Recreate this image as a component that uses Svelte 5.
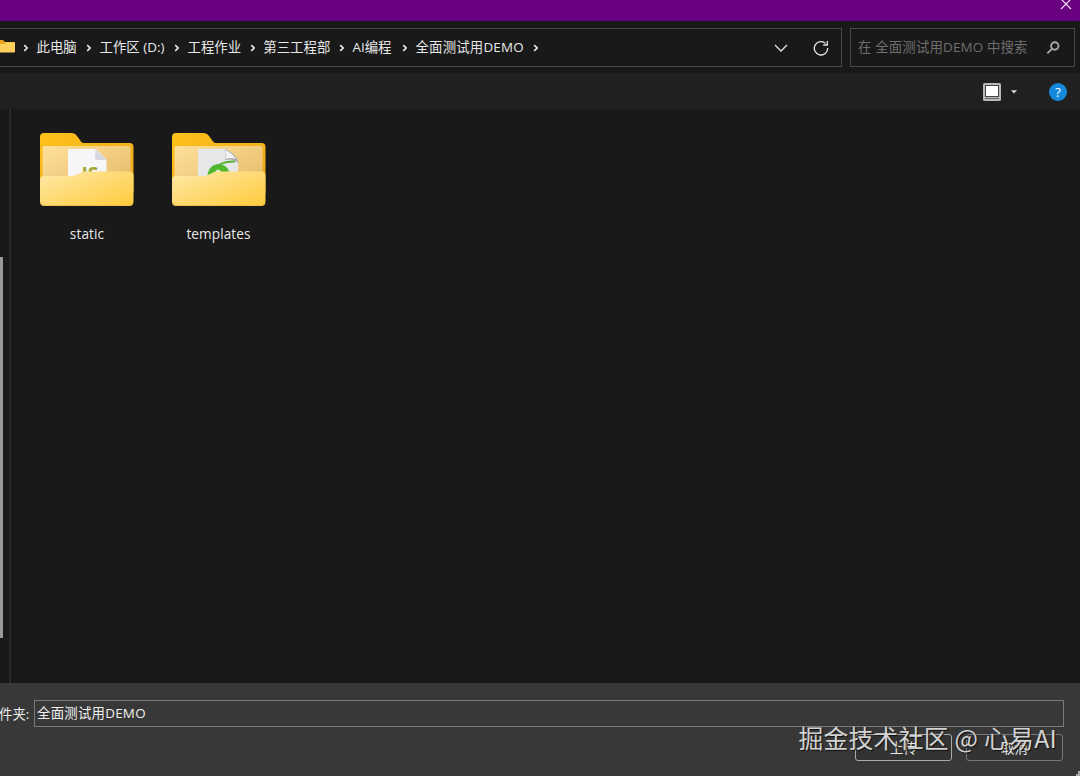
<script lang="ts">
  interface Crumb {
    label: string;
    width: number;
  }

  const crumbs: Crumb[] = [
    { label: "此电脑", width: 40.5 },
    { label: "工作区 (D:)", width: 65.5 },
    { label: "工程作业", width: 53.3 },
    { label: "第三工程部", width: 66.7 },
    { label: "AI编程", width: 40.5 },
    { label: "全面测试用DEMO", width: 109 },
  ];

  const folders = [
    { name: "static", kind: "js" },
    { name: "templates", kind: "html" },
  ];

  let folderName = $state("全面测试用DEMO");
</script>

{#snippet chevron()}
  <svg class="chevron" width="6" height="8" viewBox="0 0 6 8">
    <path d="M1.2 1.1 4.2 4 1.2 6.9" />
  </svg>
{/snippet}

<div class="dialog">
  <header class="titlebar">
    <button class="close" aria-label="关闭">
      <svg width="14" height="14" viewBox="0 0 14 14"><path d="M2 2 12 12M12 2 2 12" /></svg>
    </button>
  </header>

  <div class="address-row">
    <nav class="address">
      <svg class="mini-folder" width="15" height="13" viewBox="0 0 15 13">
        <path d="M0 0H3L5 2H14Q15 2 15 3V12H0Z" fill="#e9a51d" />
        <path d="M0 4H4L6 2.3H14Q15 2.3 15 3.3V11.5Q15 12.4 14 12.4H0Z" fill="#ffd15c" />
      </svg>
      {@render chevron()}
      {#each crumbs as crumb}
        <span class="crumb" style:width="{crumb.width}px">{crumb.label}</span>
        {@render chevron()}
      {/each}
      <span class="address-tools">
        <svg width="14" height="8" viewBox="0 0 14 8"><path d="M1 1 7 7 13 1" /></svg>
        <svg width="16" height="16" viewBox="0 0 16 16">
          <path d="M12.6 3.4A6.7 6.7 0 1 0 14.7 8M14.3 1V5H10.2" />
        </svg>
      </span>
    </nav>
    <div class="search">
      <span>在 全面测试用DEMO 中搜索</span>
      <svg width="14" height="14" viewBox="0 0 14 14">
        <circle cx="8.8" cy="5" r="3.7" />
        <path d="M6 7.9 1.3 12.4" />
      </svg>
    </div>
  </div>

  <div class="toolbar">
    <svg class="view" width="18" height="18" viewBox="0 0 18 18">
      <rect width="18" height="18" rx="1.5" fill="#b9b9b9" />
      <rect x="2.5" y="2.5" width="13" height="11" fill="#fff" stroke="#444" />
      <path d="M2 15.5H16" stroke="#666" />
    </svg>
    <svg class="drop" width="6" height="4" viewBox="0 0 6 4"><path d="M0 .3H6L3 3.5Z" fill="#ddd" /></svg>
    <button class="help" aria-label="帮助">?</button>
  </div>

  <div class="body">
    <aside class="tree"><div class="thumb"></div></aside>
    <main class="files">
      {#each folders as folder}
        <figure class="folder">
          <svg width="94" height="74" viewBox="0 0 94 74">
            <defs>
              <linearGradient id="back-{folder.kind}" x1="0" y1="0" x2="1" y2="1">
                <stop offset="0" stop-color="#ffc21a" />
                <stop offset="1" stop-color="#eaa51b" />
              </linearGradient>
              <linearGradient id="inner-{folder.kind}" x1="0" y1="0" x2="1" y2="1">
                <stop offset="0" stop-color="#ffe09a" />
                <stop offset="1" stop-color="#e2b867" />
              </linearGradient>
              <linearGradient id="front-{folder.kind}" x1="0" y1="0" x2="1" y2="1">
                <stop offset="0" stop-color="#ffe9a8" />
                <stop offset="1" stop-color="#ffcb3b" />
              </linearGradient>
            </defs>
            <path
              d="M4 0H31Q35 0 37 3L41 8.5Q42 10 44 10H89.5Q93.5 10 93.5 14V60H0V4Q0 0 4 0Z"
              fill="url(#back-{folder.kind})"
            />
            <rect x="2.5" y="13" width="88" height="45" rx="2" fill="url(#inner-{folder.kind})" />
            {#if folder.kind === "js"}
              <path d="M28 16H56L66.5 26.5V50H28Z" fill="#f6f6f9" />
              <path d="M55.5 16 66.5 27H57.5Q55 27 55 24.5Z" fill="#d7d8df" />
              <text class="js" x="41.5" y="47.5">JS</text>
            {:else}
              <path d="M26 16H53Q60 18 66 28V50H26Z" fill="#e6e7e8" />
              <path d="M53 16Q55 22 53 27Q62 25 67 31Q64 20 53 16Z" fill="#a9abb0" />
              <path d="M53.5 17Q60 20 64 26Q59 24 54 26Q55 21 53.5 17Z" fill="#f4f4f5" />
              <path
                fill-rule="evenodd"
                d="M35 45Q36 32 46 31Q54 31 57 38Q58 41 57 45ZM41 45H51Q50 37 46 36.5Q42 38 41 45Z"
                fill="#52bb2b"
              />
              <path d="M43 41Q46 36 50 40V44H42Z" fill="#d7efcc" />
              <path d="M37 42Q45 28 63 28.5" fill="none" stroke="#56b23c" stroke-width="1.8" />
            {/if}
            <path
              d="M0 47Q0 43 4 43H30Q34 43 37 41.5L40 40Q42 38.5 45 38.5H89.5Q93.5 38.5 93.5 42.5V68.5Q93.5 73 89 73H4.5Q0 73 0 68.5Z"
              fill="url(#front-{folder.kind})"
            />
            <path d="M1 69.5Q2 72.5 5 72.5H88.5Q91.5 72.5 92.5 69.5" fill="none" stroke="#f3c146" />
          </svg>
          <figcaption>{folder.name}</figcaption>
        </figure>
      {/each}
    </main>
  </div>

  <footer class="footer">
    <label class="name-row">
      <span class="name-label">件夹:</span>
      <input bind:value={folderName} />
    </label>
    <div class="actions">
      <button class="action primary">上传</button>
      <button class="action">取消</button>
    </div>
    <div class="watermark">掘金技术社区 @ 心易AI</div>
    <svg class="grip" width="4" height="5" viewBox="0 0 4 5"><path d="M2 0H4V5H0V3H2Z" fill="#aaa" /></svg>
  </footer>
</div>

<style>
  :global(body) {
    margin: 0;
    background: #191919;
  }
  .dialog {
    box-sizing: border-box;
    width: 1080px;
    height: 776px;
    display: flex;
    flex-direction: column;
    overflow: hidden;
    background: #191919;
    color: #e8e8e8;
    font: 13.4px/20px "Open Sans", "Noto Sans CJK SC", sans-serif;
  }
  button {
    padding: 0;
    border: none;
    background: none;
    color: inherit;
    font: inherit;
  }
  svg {
    display: block;
    flex: none;
  }
  .titlebar {
    height: 21px;
    flex: none;
    display: flex;
    justify-content: flex-end;
    background: #68007f;
  }
  .close {
    height: 14px;
    margin: -3px 7.5px 0 0;
  }
  .close path {
    stroke: #f0dcf4;
    stroke-width: 1.2;
  }
  .address-row {
    display: flex;
    gap: 8px;
    height: 39px;
    margin: 7px 5px 6px 0;
    flex: none;
  }
  .address {
    box-sizing: border-box;
    flex: 1;
    display: flex;
    align-items: center;
    border: 1px solid #484848;
    border-left: none;
  }
  .mini-folder {
    margin: -3px 8px 0 0;
  }
  .chevron {
    margin-top: 1px;
  }
  .chevron path {
    fill: none;
    stroke: #eee;
    stroke-width: 1.6;
  }
  .crumb {
    flex: none;
    margin: -2px 8.9px 0 7.6px;
    white-space: nowrap;
  }
  .crumb:last-of-type,
  .crumb:nth-last-of-type(2) {
    letter-spacing: 0.2px;
  }
  .address-tools {
    display: flex;
    align-items: center;
    gap: 25px;
    margin-left: auto;
    padding-right: 12px;
  }
  .address-tools path {
    fill: none;
    stroke: #e6e6e6;
    stroke-width: 1.3;
  }
  .search {
    box-sizing: border-box;
    width: 225px;
    display: flex;
    align-items: center;
    justify-content: space-between;
    padding: 0 14px 0 7px;
    border: 1px solid #484848;
    color: #6e6e6e;
    letter-spacing: 0.17px;
    white-space: nowrap;
  }
  .search span {
    margin-top: -1px;
  }
  .search svg {
    fill: none;
    stroke: #a8a8a8;
    stroke-width: 1.9;
  }
  .toolbar {
    height: 36px;
    flex: none;
    display: flex;
    align-items: center;
    justify-content: flex-end;
    padding-right: 13px;
    background: #202020;
  }
  .view {
    margin-top: 1px;
  }
  .drop {
    margin: 2px 32px 0 10px;
  }
  .help {
    width: 18px;
    height: 18px;
    margin-top: 1px;
    border-radius: 50%;
    background: #1488da;
    color: #fff;
    font-size: 13px;
    line-height: 18px;
  }
  .body {
    flex: 1;
    min-height: 0;
    display: flex;
  }
  .tree {
    box-sizing: border-box;
    width: 11px;
    border-right: 2px solid #292929;
  }
  .thumb {
    width: 3px;
    height: 381px;
    margin-top: 148px;
    background: #9a9a9a;
  }
  .files {
    display: flex;
    align-items: flex-start;
    gap: 37.5px;
    padding: 24px 0 0 29px;
  }
  .folder {
    width: 94px;
    margin: 0;
    text-align: center;
  }
  figcaption {
    margin-top: 17px;
    font-size: 13.6px;
    letter-spacing: 0.1px;
  }
  .js {
    fill: #a0a632;
    font: bold 19px "Open Sans", sans-serif;
  }
  .footer {
    position: relative;
    box-sizing: border-box;
    height: 93px;
    flex: none;
    padding: 17px 16px 0 0;
    background: #383838;
  }
  .name-row {
    display: flex;
    align-items: center;
  }
  .name-label {
    width: 34px;
    margin: 0 1px 0 -1px;
    white-space: nowrap;
  }
  input {
    box-sizing: border-box;
    flex: 1;
    height: 27px;
    padding: 0 2px 4px;
    border: 1px solid #7a7a7a;
    background: #383838;
    color: #f0f0f0;
    font: inherit;
    letter-spacing: 0.25px;
    outline: none;
  }
  .actions {
    display: flex;
    justify-content: flex-end;
    gap: 14px;
    margin: 7px 1px 0 0;
  }
  .action {
    box-sizing: border-box;
    width: 97px;
    height: 27px;
    border: 1px solid #777;
    border-radius: 3px;
    background: #333;
  }
  .primary {
    border-color: #aaa;
  }
  .watermark {
    position: absolute;
    right: 23px;
    top: 36px;
    color: #d2d2d2;
    font: 24.8px/36px "Noto Sans CJK SC", sans-serif;
    letter-spacing: 0.25px;
    white-space: nowrap;
    text-shadow: 1px 1px 1px #111;
  }
  .grip {
    position: absolute;
    right: 0;
    bottom: 0;
  }
</style>
